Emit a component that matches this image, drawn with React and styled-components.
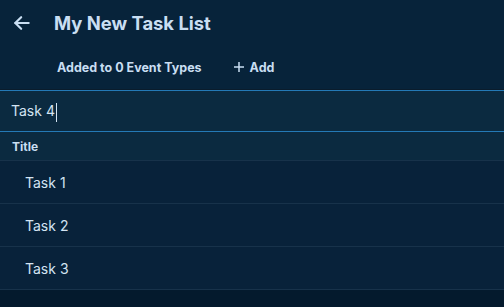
import styled, { createGlobalStyle } from "styled-components";

const GlobalStyle = createGlobalStyle`
  html, body {
    margin: 0;
    padding: 0;
    background-color: #041a2d;
    font-family: Inter, "Noto Sans", sans-serif;
  }
`;

const Page = styled.div`
  width: 504px;
  min-height: 307px;
  background-color: #041a2d;
`;

const Header = styled.div`
  background-color: #07233a;
  border-bottom: 1px solid #0a1c2c;
`;

const TitleRow = styled.div`
  display: flex;
  align-items: center;
  height: 45px;
  padding-left: 11px;
`;

const BackButton = styled.button`
  display: flex;
  align-items: center;
  justify-content: center;
  width: 22px;
  height: 22px;
  padding: 0;
  margin-right: 21px;
  border: none;
  background: none;
  color: #c9def2;
  cursor: pointer;
`;

const Title = styled.h1`
  margin: 0;
  font-size: 18.4px;
  font-weight: 700;
  color: #c9def2;
`;

const SubRow = styled.div`
  display: flex;
  align-items: center;
  height: 44px;
  padding-left: 57px;
  gap: 31px;
`;

const SubText = styled.span`
  font-size: 12.5px;
  font-weight: 700;
  color: #c9def2;
`;

const AddButton = styled.button`
  display: flex;
  align-items: center;
  gap: 5px;
  padding: 0;
  border: none;
  background: none;
  font-family: inherit;
  font-size: 12.5px;
  font-weight: 700;
  color: #c9def2;
  cursor: pointer;
`;

const InputWrap = styled.div`
  display: flex;
  align-items: center;
  height: 40px;
  padding-left: 11px;
  background-color: #0b2a40;
  border-top: 1px solid #2479b6;
  border-bottom: 1px solid #2479b6;
`;

const InputText = styled.span`
  font-size: 14px;
  color: #d3e4f3;
  padding-top: 2px;
`;

const Caret = styled.span`
  display: inline-block;
  width: 1px;
  height: 19px;
  margin-left: 1px;
  vertical-align: middle;
  background-color: #d3e4f3;
`;

const TableHead = styled.div`
  display: flex;
  align-items: center;
  height: 28px;
  padding-left: 12px;
  background-color: #0b2a40;
  border-bottom: 1px solid #17324a;
`;

const HeadCell = styled.span`
  font-size: 12px;
  font-weight: 700;
  color: #c9def2;
`;

const Row = styled.div`
  display: flex;
  align-items: center;
  height: 42px;
  padding-left: 25px;
  background-color: #08223a;
  border-bottom: 1px solid #17324a;
`;

const RowText = styled.span`
  font-size: 14px;
  color: #d3e4f3;
`;

const tasks = ["Task 1", "Task 2", "Task 3"];

const App = () => {
  return (
    <Page>
      <GlobalStyle />
      <Header>
        <TitleRow>
          <BackButton aria-label="Back">
            <svg width="20" height="20" viewBox="0 0 24 24" fill="none" stroke="currentColor" strokeWidth="2.6" strokeLinecap="round" strokeLinejoin="round">
              <path d="M20 12H4" />
              <path d="M11 5l-7 7 7 7" />
            </svg>
          </BackButton>
          <Title>My New Task List</Title>
        </TitleRow>
        <SubRow>
          <SubText>Added to 0 Event Types</SubText>
          <AddButton>
            <svg width="12" height="12" viewBox="0 0 12 12" stroke="currentColor" strokeWidth="1.5">
              <path d="M6 1v10M1 6h10" />
            </svg>
            Add
          </AddButton>
        </SubRow>
      </Header>
      <InputWrap>
        <InputText>
          Task 4<Caret />
        </InputText>
      </InputWrap>
      <TableHead>
        <HeadCell>Title</HeadCell>
      </TableHead>
      {tasks.map((task) => (
        <Row key={task}>
          <RowText>{task}</RowText>
        </Row>
      ))}
    </Page>
  );
};

export default App;
